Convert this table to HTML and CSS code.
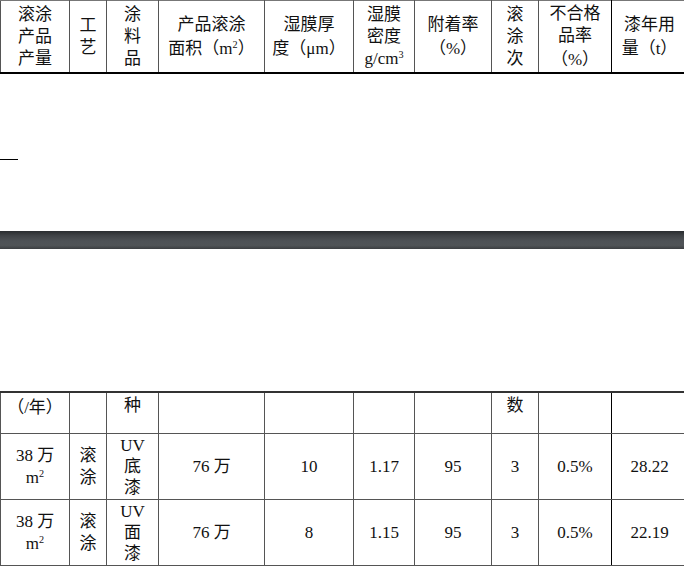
FILE: index.html
```html
<!DOCTYPE html>
<html lang="zh-CN">
<head>
<meta charset="utf-8">
<title>滚涂工艺参数表</title>
<link rel="stylesheet" href="styles.css">
</head>
<body>
<div class="page page-top">
  <table class="sheet">
    <colgroup>
      <col class="w1"><col class="w2"><col class="w3"><col class="w4"><col class="w5">
      <col class="w6"><col class="w7"><col class="w8"><col class="w9"><col class="w10">
    </colgroup>
    <tr class="head">
      <td>滚涂<br>产品<br>产量</td>
      <td>工<br>艺</td>
      <td>涂<br>料<br>品</td>
      <td>产品滚涂<br>面积<span class="lp">（</span>m<sup>2</sup><span class="rp">）</span></td>
      <td>湿膜厚<br>度<span class="lp">（</span>μm<span class="rp">）</span></td>
      <td>湿膜<br>密度<br>g/cm<sup>3</sup></td>
      <td>附着率<br><span class="lp">（</span>%<span class="rp">）</span></td>
      <td>滚<br>涂<br>次</td>
      <td class="c9">不合格<br>品率<br><span class="lp">（</span>%<span class="rp">）</span></td>
      <td class="c10">漆年用<br>量<span class="lp">（</span>t<span class="rp">）</span></td>
    </tr>
  </table>
  <div class="footnote-rule"></div>
</div>
<div class="page-gap"></div>
<div class="page page-bottom">
  <table class="sheet sheet-cont">
    <colgroup>
      <col class="w1"><col class="w2"><col class="w3"><col class="w4"><col class="w5">
      <col class="w6"><col class="w7"><col class="w8"><col class="w9"><col class="w10">
    </colgroup>
    <tr class="cont">
      <td><span class="lp">（</span>/年<span class="rp">）</span></td>
      <td></td>
      <td>种</td>
      <td></td>
      <td></td>
      <td></td>
      <td></td>
      <td>数</td>
      <td class="c9"></td>
      <td class="c10"></td>
    </tr>
    <tr class="data">
      <td>38 万<br>m<sup>2</sup></td>
      <td>滚<br>涂</td>
      <td class="tight">UV<br>底<br>漆</td>
      <td>76 万</td>
      <td>10</td>
      <td>1.17</td>
      <td>95</td>
      <td>3</td>
      <td class="c9">0.5%</td>
      <td class="c10">28.22</td>
    </tr>
    <tr class="data">
      <td>38 万<br>m<sup>2</sup></td>
      <td>滚<br>涂</td>
      <td class="tight">UV<br>面<br>漆</td>
      <td>76 万</td>
      <td>8</td>
      <td>1.15</td>
      <td>95</td>
      <td>3</td>
      <td class="c9">0.5%</td>
      <td class="c10">22.19</td>
    </tr>
  </table>
</div>
</body>
</html>
```
FILE: styles.css
```css
html, body {
  margin: 0;
  padding: 0;
  background: #fff;
}

body {
  width: 684px;
  overflow: hidden;
  font-family: "Liberation Serif", "Noto Sans CJK SC", serif;
  font-size: 17px;
  color: #111;
}

.page-top {
  height: 231px;
}

.sheet {
  border-collapse: collapse;
  table-layout: fixed;
  width: 687px;
}

.w1 { width: 69px; }
.w2 { width: 37px; }
.w3 { width: 52px; }
.w4 { width: 106px; }
.w5 { width: 89px; }
.w6 { width: 61px; }
.w7 { width: 77px; }
.w8 { width: 47px; }
.w9 { width: 73px; }
.w10 { width: 76px; }

.sheet td {
  border: 1px solid #555;
  padding: 0 1px;
  text-align: center;
  vertical-align: middle;
  line-height: 22px;
  white-space: nowrap;
}

.sheet td.c9 { border-right-color: #000; }
.sheet td.c10 { border-left-color: #000; }

.head td {
  height: 71px;
  border-top-color: #777;
  border-bottom: 2px solid #000;
}

.lp,
.rp {
  display: inline-block;
  width: 1em;
  font-family: "Noto Sans CJK SC", sans-serif;
}

.lp { text-align: right; }
.rp { text-align: left; }

sup {
  font-size: 0.6em;
  line-height: 0;
  vertical-align: 0.55em;
}

.footnote-rule {
  width: 18px;
  height: 1px;
  background: #000;
  margin-top: 85px;
}

.page-gap {
  height: 18px;
  background: linear-gradient(#2a2d30 0%, #3f4246 25%, #4e5256 55%, #505457 80%, #3b3e41 100%);
}

.page-bottom {
  padding-top: 142px;
}

.sheet-cont .cont td {
  border-top: 2px solid #333;
  vertical-align: top;
  height: 38px;
  padding-top: 2px;
}

.data td {
  height: 65px;
  border-top-color: #777;
}

.data td.tight {
  line-height: 21px;
}
```
